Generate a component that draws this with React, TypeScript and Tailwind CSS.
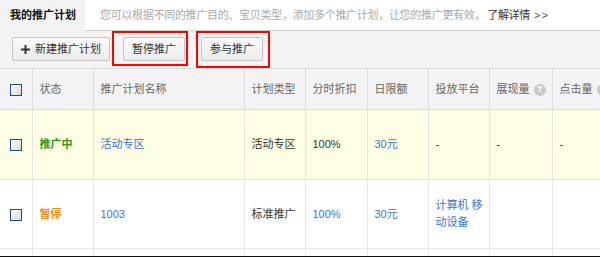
import React from "react";

const FONT = '"Liberation Sans", "Noto Sans CJK SC", sans-serif';

function Checkbox() {
  return (
    <span className="inline-block h-[12px] w-[12px] border border-[#1f4f86] bg-linear-to-br from-white to-[#d8d8d8] align-middle" />
  );
}

function Help() {
  return (
    <span className="ml-[4px] inline-flex h-[12px] w-[12px] items-center justify-center rounded-full bg-[#c9c9c9] align-middle text-[9px] font-bold leading-none text-white">
      ?
    </span>
  );
}

function Btn({ children }: { children: React.ReactNode }) {
  return (
    <button className="flex h-[24px] items-center whitespace-nowrap rounded-[2px] border border-[#c6c6c6] bg-linear-to-b from-[#fafafa] to-[#ebebeb] px-[8px] text-[11px] text-[#333]">
      {children}
    </button>
  );
}

const th = "h-[41px] whitespace-nowrap border-r border-b border-[#dcdcdc] px-[7px] text-left align-middle font-normal text-[#666]";
const td = "whitespace-nowrap border-r border-b border-[#e6e6e6] px-[7px] align-middle";

export default function App() {
  return (
    <div className="h-[257px] w-[600px] overflow-hidden bg-white text-[11px]" style={{ fontFamily: FONT }}>
      <div className="flex h-[31px]">
        <div className="flex w-[85px] items-center whitespace-nowrap bg-[#f3f3f3] pl-[10px] font-bold text-[#111]">我的推广计划</div>
        <div className="flex flex-1 items-center whitespace-nowrap border-b border-[#cfcfcf] pl-[15px] tracking-[-0.3px] text-[#aaa]">
          您可以根据不同的推广目的、宝贝类型，添加多个推广计划，让您的推广更有效，
          <span className="ml-[2px] text-[#333]">了解详情</span>
          <span className="ml-[4px] tracking-[1px] text-[#555]">&gt;&gt;</span>
        </div>
      </div>

      <div className="flex h-[37px] items-start bg-[#f3f3f3] pl-[12px]">
        <div className="mt-[6px]">
          <Btn>
            <svg width="9" height="9" viewBox="0 0 9 9" className="mr-[5px]">
              <path d="M4.5 0v9M0 4.5h9" stroke="#333" strokeWidth="2" />
            </svg>
            新建推广计划
          </Btn>
        </div>
        <div className="ml-[2px] border-2 border-[#f00] pt-[4px] pr-[1px] pb-[3px] pl-[9px]">
          <Btn>暂停推广</Btn>
        </div>
        <div className="ml-[8px] border-2 border-[#f00] pt-[4px] pr-[5px] pb-[5px] pl-[3px]">
          <Btn>参与推广</Btn>
        </div>
      </div>

      <table className="w-[640px] table-fixed border-collapse border-t border-[#dcdcdc]">
        <colgroup>
          <col className="w-[32px]" />
          <col className="w-[61px]" />
          <col className="w-[151px]" />
          <col className="w-[61px]" />
          <col className="w-[62px]" />
          <col className="w-[61px]" />
          <col className="w-[61px]" />
          <col className="w-[63px]" />
          <col className="w-[88px]" />
        </colgroup>
        <thead>
          <tr className="bg-[#f3f3f3]">
            <th className={th + " pl-[10px]"}>
              <Checkbox />
            </th>
            <th className={th}>状态</th>
            <th className={th}>推广计划名称</th>
            <th className={th}>计划类型</th>
            <th className={th}>分时折扣</th>
            <th className={th}>日限额</th>
            <th className={th}>投放平台</th>
            <th className={th}>
              展现量
              <Help />
            </th>
            <th className={th}>
              点击量
              <Help />
            </th>
          </tr>
        </thead>
        <tbody>
          <tr className="h-[70px] bg-[#fefee4]">
            <td className={td + " pl-[10px]"}>
              <Checkbox />
            </td>
            <td className={td + " font-bold text-[#2f9a12]"}>推广中</td>
            <td className={td + " text-[#3875d7]"}>活动专区</td>
            <td className={td + " text-[#333]"}>活动专区</td>
            <td className={td + " text-[#333]"}>100%</td>
            <td className={td + " text-[#3875d7]"}>30元</td>
            <td className={td + " text-[#333]"}>-</td>
            <td className={td + " text-[#333]"}>-</td>
            <td className={td + " text-[#333]"}>-</td>
          </tr>
          <tr className="h-[69px] bg-white">
            <td className={td + " pl-[10px]"}>
              <Checkbox />
            </td>
            <td className={td + " font-bold text-[#ff8a00]"}>暂停</td>
            <td className={td + " text-[#3875d7]"}>1003</td>
            <td className={td + " text-[#333]"}>标准推广</td>
            <td className={td + " text-[#3875d7]"}>100%</td>
            <td className={td + " text-[#3875d7]"}>30元</td>
            <td className="border-r border-b border-[#e6e6e6] pl-[7px] pr-[2px] align-middle leading-[17px] break-all text-[#3875d7]">
              计算机{"\u00a0"}移动设备
            </td>
            <td className={td}></td>
            <td className={td}></td>
          </tr>
          <tr className="h-[7px]">
            <td className="border-r border-[#e6e6e6]"></td>
            <td className="border-r border-[#e6e6e6]"></td>
            <td className="border-r border-[#e6e6e6]"></td>
            <td className="border-r border-[#e6e6e6]"></td>
            <td className="border-r border-[#e6e6e6]"></td>
            <td className="border-r border-[#e6e6e6]"></td>
            <td className="border-r border-[#e6e6e6]"></td>
            <td className="border-r border-[#e6e6e6]"></td>
            <td></td>
          </tr>
        </tbody>
      </table>
      <div className="h-[3px] bg-[#111]" />
    </div>
  );
}
